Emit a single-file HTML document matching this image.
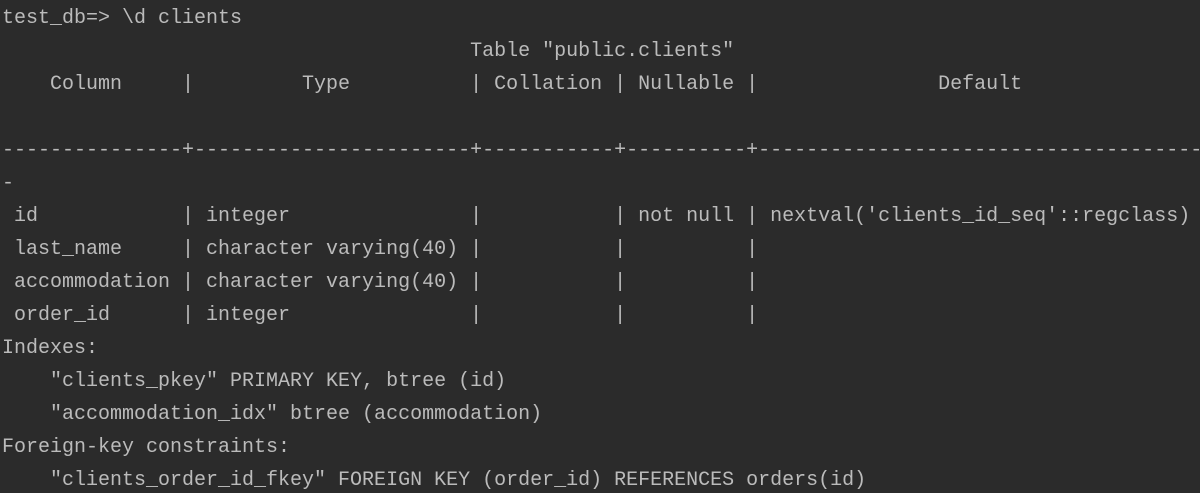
<!DOCTYPE html>
<html><head><style>
html,body{margin:0;padding:0;background:#2b2b2b;width:1200px;height:493px;overflow:hidden}
pre{margin:0;padding:2px 0 0 2px;font-family:"Liberation Mono",monospace;font-size:20px;line-height:33px;color:#bbbbbb;white-space:pre;letter-spacing:0}
</style></head><body><pre>test_db=&gt; \d clients
                                       Table "public.clients"
    Column     |         Type          | Collation | Nullable |               Default

---------------+-----------------------+-----------+----------+-------------------------------------
-
 id            | integer               |           | not null | nextval('clients_id_seq'::regclass)
 last_name     | character varying(40) |           |          |
 accommodation | character varying(40) |           |          |
 order_id      | integer               |           |          |
Indexes:
    "clients_pkey" PRIMARY KEY, btree (id)
    "accommodation_idx" btree (accommodation)
Foreign-key constraints:
    "clients_order_id_fkey" FOREIGN KEY (order_id) REFERENCES orders(id)</pre></body></html>
